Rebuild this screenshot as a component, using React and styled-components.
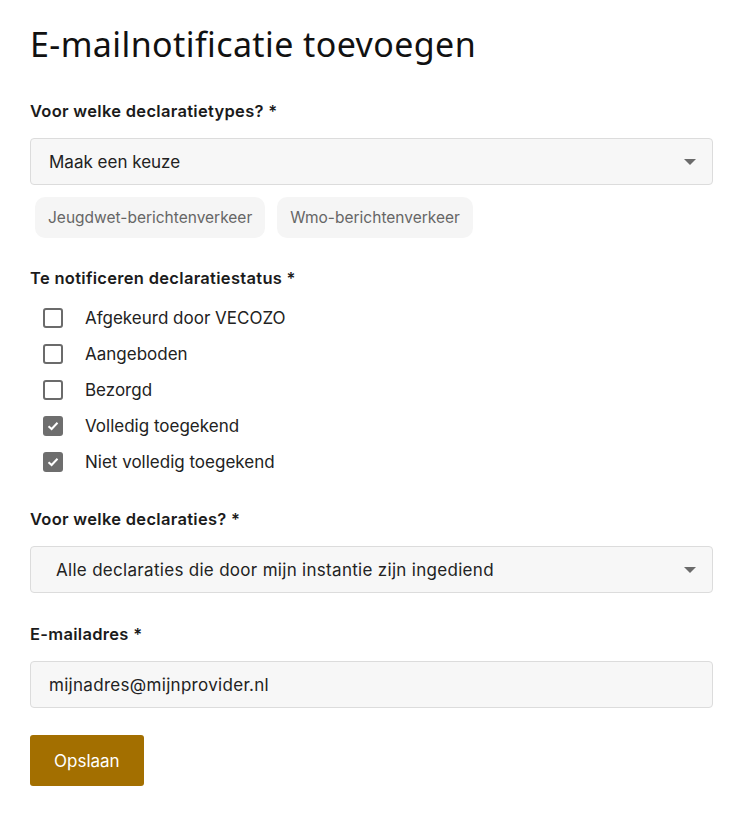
import React from "react";
import styled, { createGlobalStyle } from "styled-components";

const Global = createGlobalStyle`
  body {
    margin: 0;
    background: #fff;
    font-family: "Inter", "Noto Sans", sans-serif;
    color: #1a1a1a;
  }
`;

const Page = styled.div`
  padding: 21px 35px 30px 30px;
  display: flex;
  flex-direction: column;
`;

const Title = styled.h1`
  font-family: "Noto Sans", sans-serif;
  font-weight: 400;
  font-size: 34px;
  letter-spacing: 0.4px;
  margin: 0 0 34px;
  color: #111;
`;

const Field = styled.div`
  display: flex;
  flex-direction: column;
  margin-bottom: ${(p) => p.$gap || 30}px;
`;

const Label = styled.label`
  font-size: 16.5px;
  font-weight: 600;
  letter-spacing: 0.3px;
  color: #1b1b1b;
  margin-bottom: 17px;
`;

const Box = styled.div`
  height: 45px;
  border: 1px solid #dcdcdc;
  border-radius: 4px;
  background: #f7f7f7;
  display: flex;
  align-items: center;
  justify-content: space-between;
  padding: 0 16px 0 ${(p) => p.$pad || 18}px;
  font-size: 17px;
  letter-spacing: ${(p) => p.$ls || 0}px;
  color: #222;
`;

const Caret = styled.span`
  width: 0;
  height: 0;
  border-left: 6px solid transparent;
  border-right: 6px solid transparent;
  border-top: 6px solid #6b6b6b;
`;

const Chips = styled.div`
  display: flex;
  gap: 12px;
  margin: 12px 0 0 5px;
`;

const Chip = styled.span`
  background: #f5f5f5;
  border-radius: 10px;
  height: 41px;
  display: flex;
  align-items: center;
  padding: 0 13px;
  font-size: 15.5px;
  color: #666;
`;

const List = styled.div`
  display: flex;
  flex-direction: column;
  gap: 14px;
  padding-left: 13px;
  margin-top: 2px;
`;

const Row = styled.label`
  display: flex;
  align-items: center;
  gap: 22px;
  font-size: 17px;
  color: #222;
  height: 22px;
`;

const Check = styled.span`
  width: 20px;
  height: 20px;
  box-sizing: border-box;
  border-radius: 3px;
  border: ${(p) => (p.$on ? "none" : "2px solid #6b6b6b")};
  background: ${(p) => (p.$on ? "#6e6e6e" : "#fff")};
  display: flex;
  align-items: center;
  justify-content: center;
`;

const Button = styled.button`
  align-self: flex-start;
  background: #a36f00;
  color: #fff;
  border: none;
  border-radius: 3px;
  height: 51px;
  padding: 0 24px;
  font-family: "Inter", "Noto Sans", sans-serif;
  font-size: 17px;
`;

const statuses = [
  ["Afgekeurd door VECOZO", false],
  ["Aangeboden", false],
  ["Bezorgd", false],
  ["Volledig toegekend", true],
  ["Niet volledig toegekend", true],
];

export default function App() {
  return (
    <>
      <Global />
      <Page>
        <Title>E-mailnotificatie toevoegen</Title>
        <Field $gap={30}>
          <Label>Voor welke declaratietypes? *</Label>
          <Box>
            Maak een keuze
            <Caret />
          </Box>
          <Chips>
            <Chip>Jeugdwet-berichtenverkeer</Chip>
            <Chip>Wmo-berichtenverkeer</Chip>
          </Chips>
        </Field>
        <Field $gap={36}>
          <Label>Te notificeren declaratiestatus *</Label>
          <List>
            {statuses.map(([t, on]) => (
              <Row key={t}>
                <Check $on={on}>
                  {on && (
                    <svg width="12" height="10" viewBox="0 0 12 10">
                      <path d="M1.5 5.2 L4.6 8 L10.5 1.8" fill="none" stroke="#fff" strokeWidth="2" />
                    </svg>
                  )}
                </Check>
                {t}
              </Row>
            ))}
          </List>
        </Field>
        <Field $gap={31}>
          <Label>Voor welke declaraties? *</Label>
          <Box $pad={25} $ls={0.3}>
            Alle declaraties die door mijn instantie zijn ingediend
            <Caret />
          </Box>
        </Field>
        <Field $gap={27}>
          <Label>E-mailadres *</Label>
          <Box $ls={0.3}>mijnadres@mijnprovider.nl</Box>
        </Field>
        <Button>Opslaan</Button>
      </Page>
    </>
  );
}
